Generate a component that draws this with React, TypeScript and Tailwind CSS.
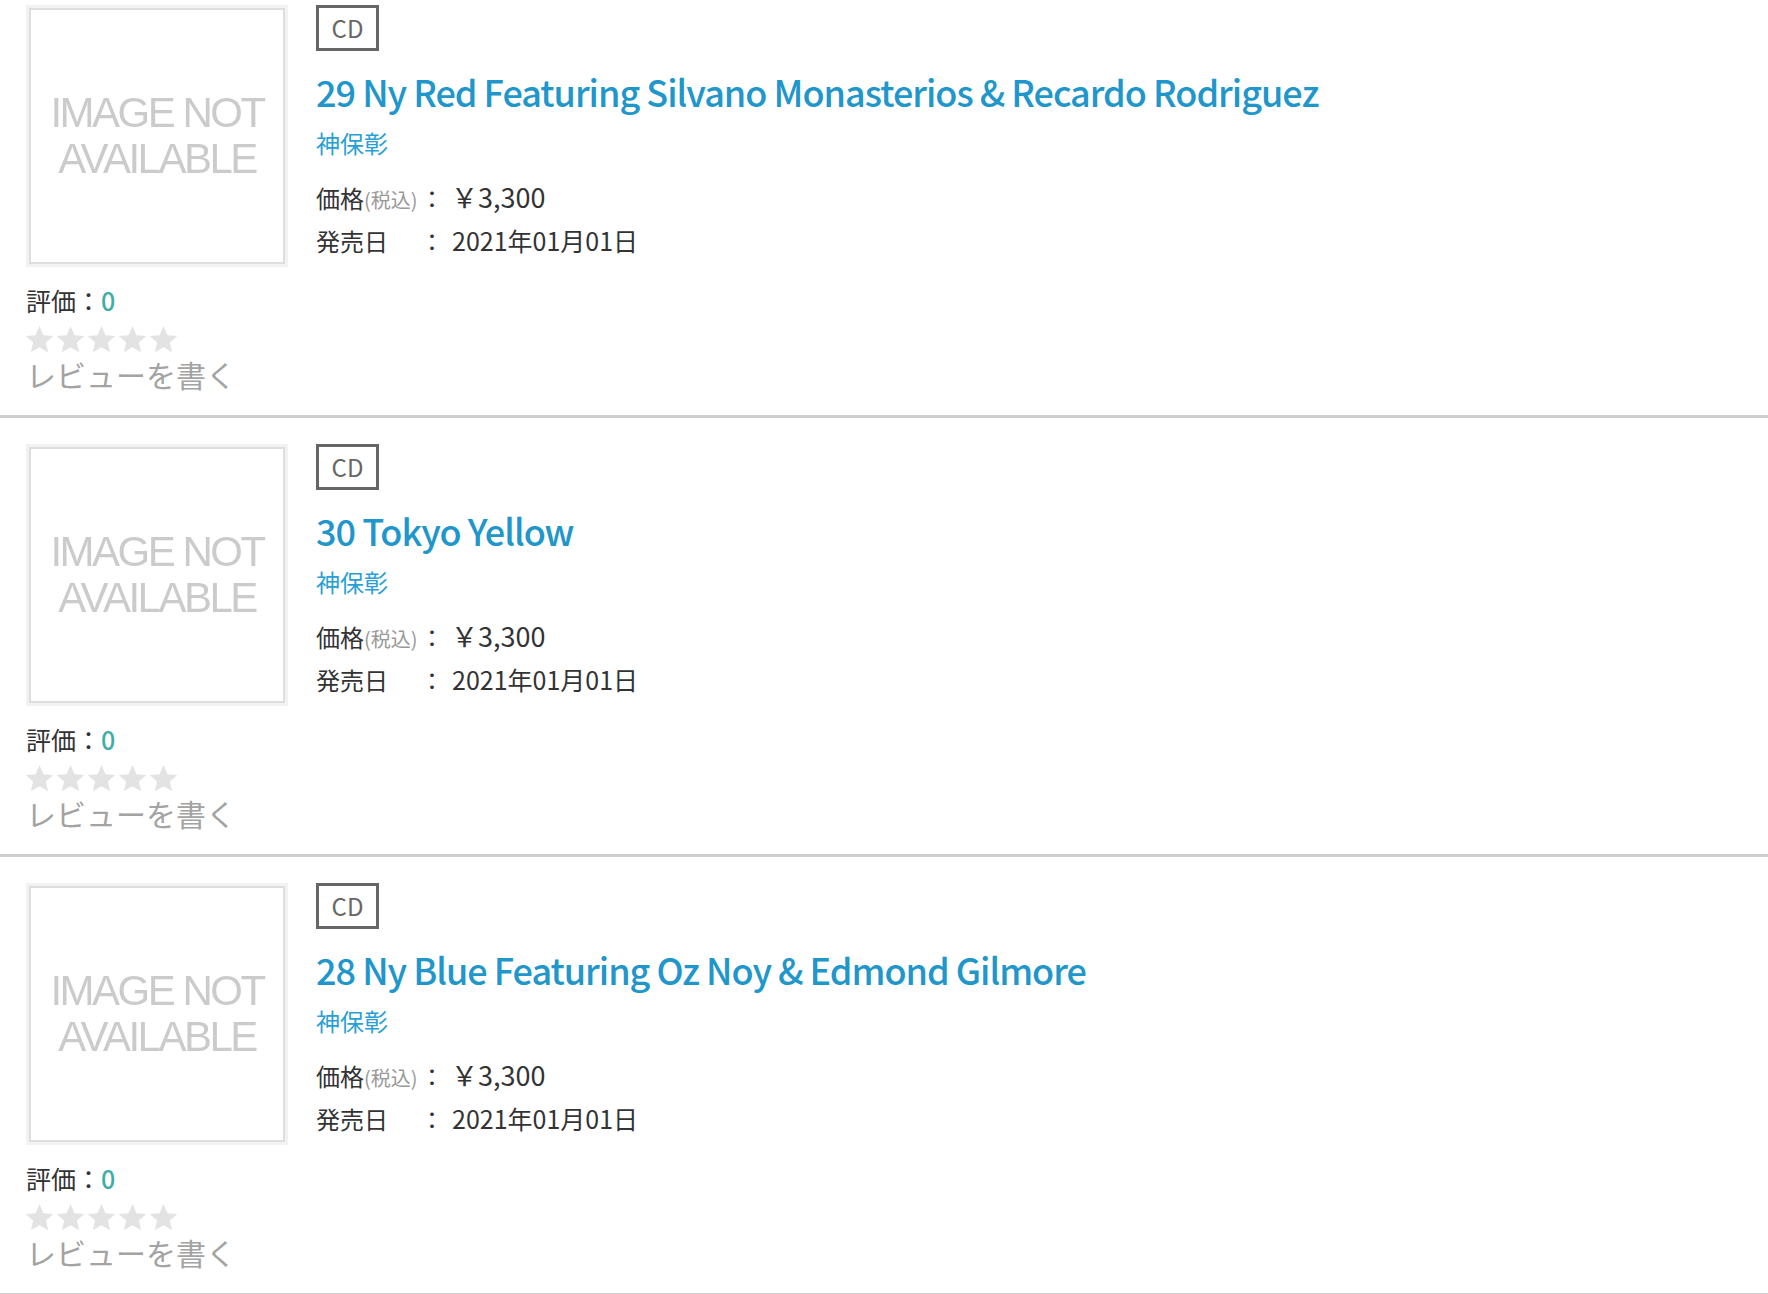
const items = [
  { title: "29 Ny Red Featuring Silvano Monasterios & Recardo Rodriguez" },
  { title: "30 Tokyo Yellow" },
  { title: "28 Ny Blue Featuring Oz Noy & Edmond Gilmore" },
];

function Star() {
  return (
    <svg viewBox="1.5 1.5 21 21" className="w-[27px] h-[27px]">
      <path
        d="M12 1.5l3.1 7.1 7.7.7-5.8 5.1 1.7 7.6L12 18l-6.7 4 1.7-7.6-5.8-5.1 7.7-.7z"
        fill="#e3e3e3"
      />
    </svg>
  );
}

function NoImage() {
  return (
    <div className="w-[262px] h-[262px] bg-[#f2f2f2] p-[3px]">
      <div className="w-full h-full bg-white border-2 border-[#dedede] flex flex-col items-center justify-center">
        <span className="font-['Liberation_Sans',sans-serif] text-[42px] leading-[46px] tracking-[-2.5px] text-[#cbcbcb] blur-[0.5px]">
          IMAGE NOT
        </span>
        <span className="font-['Liberation_Sans',sans-serif] text-[42px] leading-[46px] tracking-[-2.5px] text-[#cbcbcb] blur-[0.5px]">
          AVAILABLE
        </span>
      </div>
    </div>
  );
}

function Row({ title, first }: { title: string; first: boolean }) {
  return (
    <div
      className={`flex px-[26px] pb-[23px] border-b-[3px] border-[#cfcfcf] ${
        first ? "pt-[5px]" : "pt-[26px]"
      }`}>
      <div className="w-[262px] shrink-0">
        <NoImage />
        <div className="mt-[15px] text-[25px] leading-[36px] text-[#333]">
          評価：<span className="text-[#3fada5] font-medium">0</span>
        </div>
        <div className="mt-[7px] flex items-center gap-[4px] h-[28px]">
          <Star />
          <Star />
          <Star />
          <Star />
          <Star />
        </div>
        <div className="mt-[3px] text-[30px] leading-[36px] text-[#a3a3a3] whitespace-nowrap">
          レビューを書く
        </div>
      </div>

      <div className="ml-[28px] flex flex-col items-start">
        <div className="h-[46px] w-[63px] border-[3px] border-[#666] flex items-center justify-center text-[24px] text-[#666]">
          CD
        </div>
        <div className="mt-[18px] text-[36px] leading-[44px] font-medium text-[#2196cb] tracking-[-1px]">
          {title}
        </div>
        <div className="mt-[12px] text-[24px] leading-[36px] text-[#2a9fd6]">
          神保彰
        </div>
        <div className="mt-[18px] flex items-baseline text-[#333] whitespace-nowrap">
          <div className="w-[104px] shrink-0 text-[24px] leading-[36px]">
            価格<span className="text-[20px] text-[#999]">(税込)</span>
          </div>
          <span className="text-[24px] leading-[36px]">：</span>
          <span className="ml-[7px] text-[27px] leading-[36px]">￥3,300</span>
        </div>
        <div className="mt-[4px] flex items-baseline text-[#333] leading-[36px] whitespace-nowrap">
          <div className="w-[104px] shrink-0 text-[24px]">発売日</div>
          <span className="text-[24px]">：</span>
          <span className="ml-[8px] text-[25px]">2021年01月01日</span>
        </div>
      </div>
    </div>
  );
}

export default function App() {
  return (
    <div className="bg-white min-h-screen font-['Noto_Sans_CJK_JP',sans-serif]">
      {items.map((item, i) => (
        <Row key={i} title={item.title} first={i === 0} />
      ))}
    </div>
  );
}
